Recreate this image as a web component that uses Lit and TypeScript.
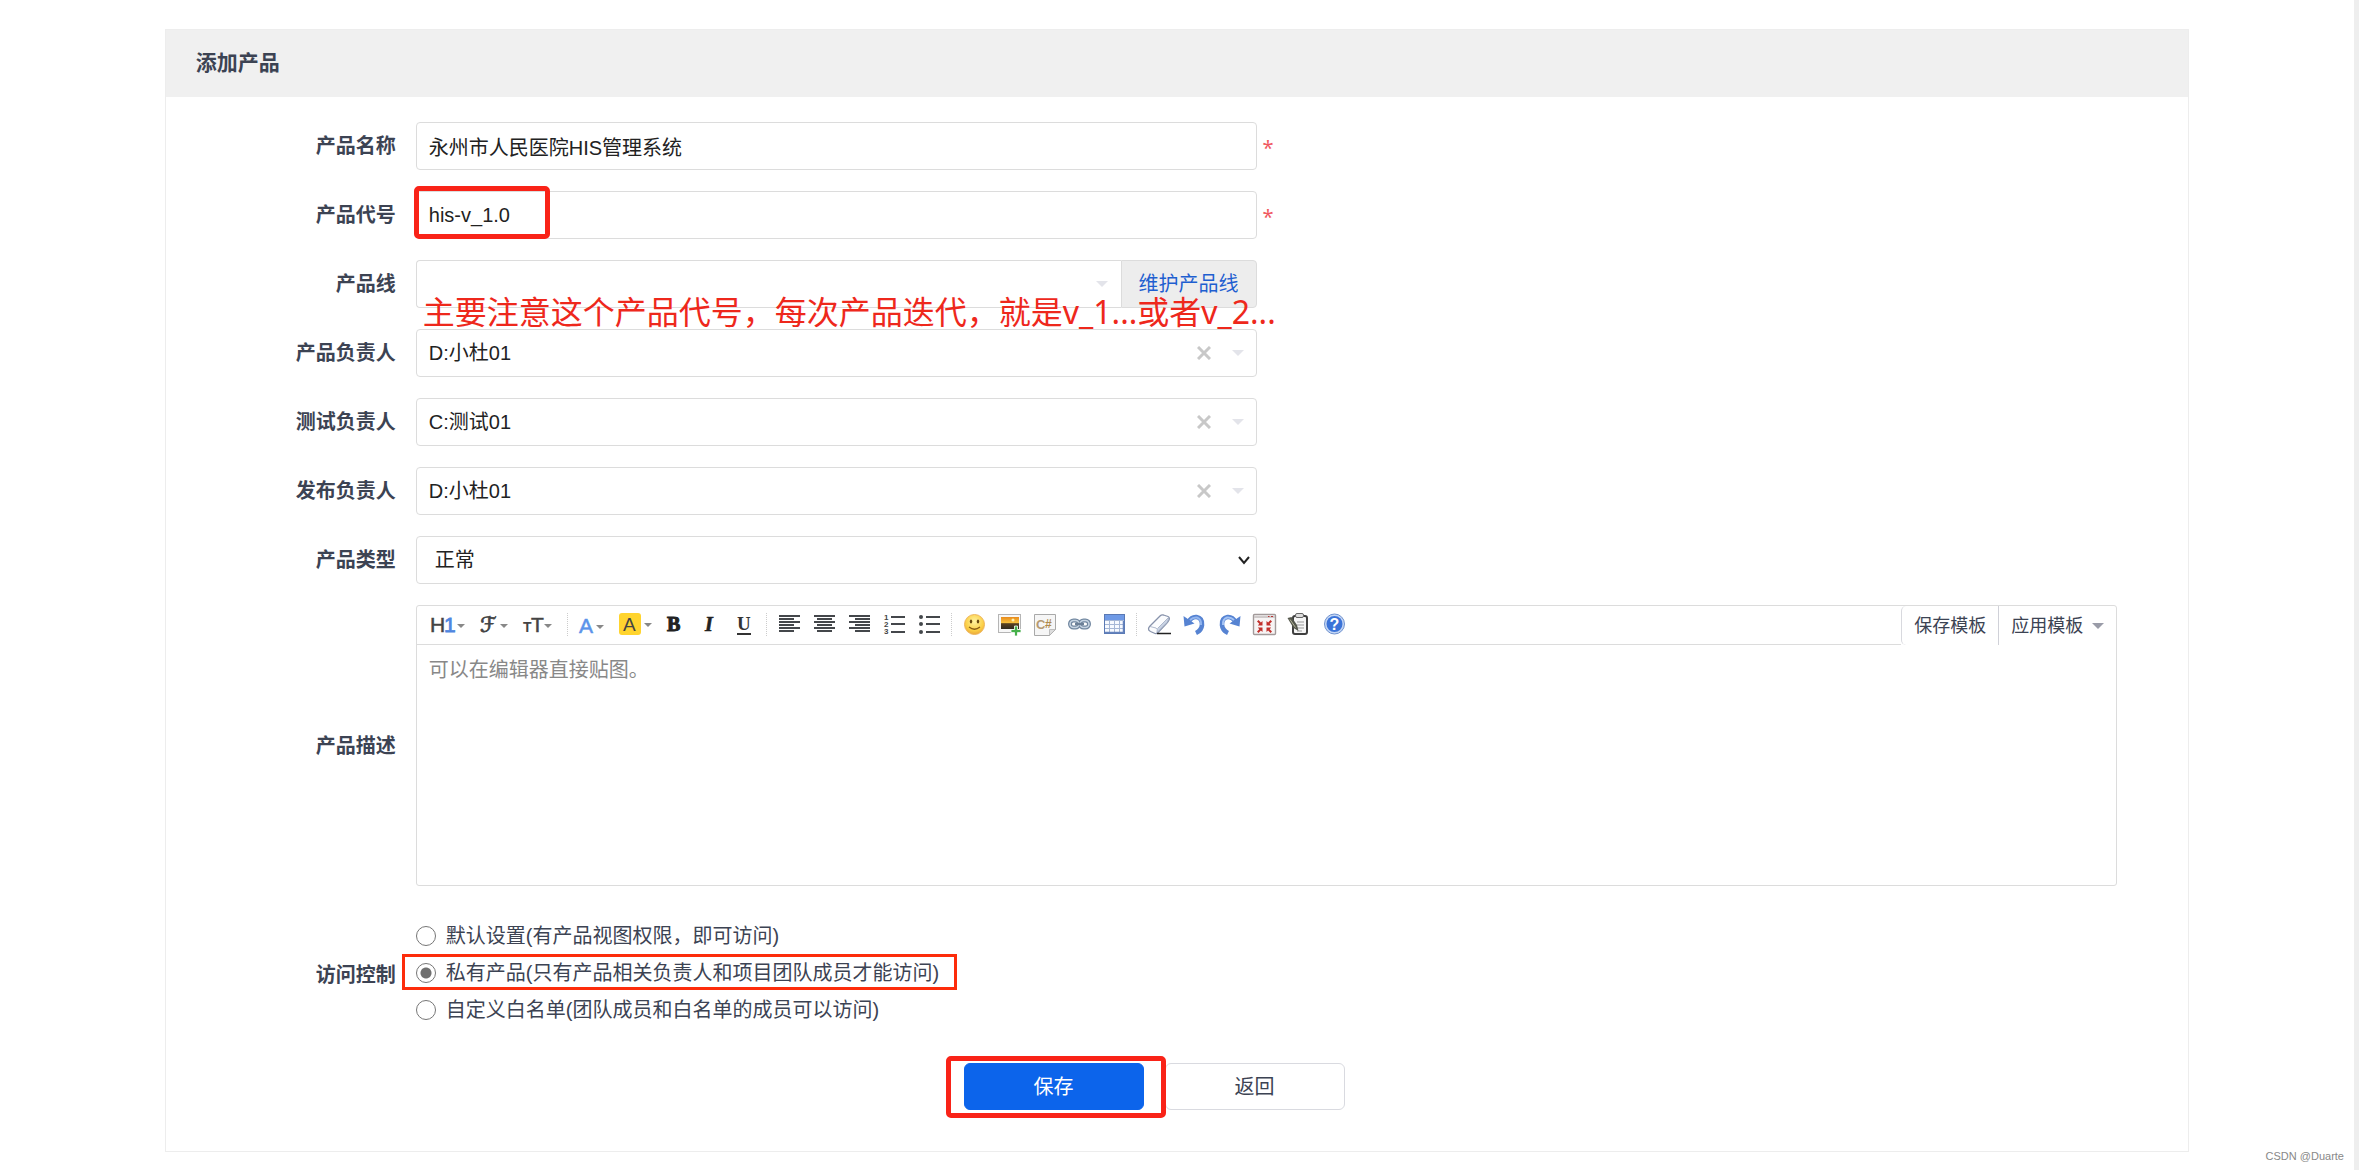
import { LitElement, html, css, svg, nothing } from "lit";
import { customElement, property } from "lit/decorators.js";

const lines = (rows: number[][]) =>
  svg`${rows.map(([x, y, w]) => svg`<rect x=${x} y=${y} width=${w} height="2" fill="#44474b"/>`)}`;

const icons: Record<string, unknown> = {
  heading: svg`<text x="5" y="20" font-family="Liberation Sans" font-size="21" fill="#444" stroke="#444" stroke-width=".5">H</text>
    <text x="19" y="20" font-family="Liberation Sans" font-size="21" fill="#4f86e0" stroke="#4f86e0" stroke-width=".8">1</text>
    <path d="M32 12h8l-4 4z" fill="#888"/>`,
  family: svg`<text x="9" y="20" font-family="DejaVu Sans" font-size="21" fill="#444" stroke="#444" stroke-width=".8">ℱ</text><path d="M29 12h8l-4 4z" fill="#888"/>`,
  size: svg`<text x="6" y="20" font-family="Liberation Sans" font-weight="bold" font-size="14" fill="#444">T</text>
    <text x="14" y="20" font-family="Liberation Sans" font-size="21" fill="#444" stroke="#444" stroke-width=".5">T</text>
    <path d="M27 12h8l-4 4z" fill="#888"/>`,
  color: svg`<text x="6" y="21" font-family="Liberation Sans" font-size="21" fill="#5c93ea" stroke="#5c93ea" stroke-width=".5">A</text><path d="M23 13h8l-4 4z" fill="#888"/>`,
  mark: svg`<rect x="4" y="1" width="22" height="22" rx="3" fill="#ffd42e"/><text x="8" y="19" font-family="Liberation Sans" font-size="19" fill="#444">A</text><path d="M29 11h8l-4 4z" fill="#888"/>`,
  bold: svg`<text x="10" y="19" font-family="Liberation Serif" font-weight="bold" font-size="20" fill="#222" stroke="#222" stroke-width="1">B</text>`,
  italic: svg`<text x="13" y="19" font-family="Liberation Serif" font-style="italic" font-weight="bold" font-size="20" fill="#222" stroke="#222" stroke-width=".6">I</text>`,
  underline: svg`<text x="10" y="18" font-family="Liberation Serif" font-weight="bold" font-size="19" fill="#333">U</text><rect x="10" y="21" width="14" height="2" fill="#333"/>`,
  left: lines([[7, 3, 21], [7, 6, 15], [7, 9, 21], [7, 12, 15], [7, 15, 21], [7, 18, 15]]),
  center: lines([[7, 3, 21], [10, 6, 15], [7, 9, 21], [10, 12, 15], [7, 15, 21], [10, 18, 15]]),
  right: lines([[7, 3, 21], [13, 6, 15], [7, 9, 21], [13, 12, 15], [7, 15, 21], [13, 18, 15]]),
  ordered: svg`${lines([[14, 4, 14], [14, 11, 14], [14, 19, 14]])}
    <g font-family="Liberation Sans" font-weight="bold" font-size="8" fill="#444"><text x="7" y="8">1</text><text x="7" y="15">2</text><text x="7" y="22">3</text></g>`,
  bullets: svg`${lines([[14, 4, 14], [14, 11, 14], [14, 19, 14]])}
    <g fill="#44474b"><circle cx="9" cy="5" r="2"/><circle cx="9" cy="12" r="2"/><circle cx="9" cy="20" r="2"/></g>`,
  smile: svg`<defs><radialGradient id="f" cx=".5" cy=".35" r=".65"><stop offset="0" stop-color="#fff3a0"/><stop offset=".7" stop-color="#fbcf45"/><stop offset="1" stop-color="#eba93a"/></radialGradient></defs>
    <circle cx="17.500" cy="12.500" r="10" fill="url(#f)" stroke="#eeb65c" stroke-width="1"/>
    <ellipse cx="14" cy="9.500" rx="1.200" ry="2" fill="#6b4a10"/><ellipse cx="21" cy="9.500" rx="1.200" ry="2" fill="#6b4a10"/>
    <path d="M12 15q5.500 4.500 11 0" fill="none" stroke="#8a5d14" stroke-width="1.300"/>`,
  image: svg`<defs><linearGradient id="s" x2="0" y2="1"><stop offset="0" stop-color="#e88a1c"/><stop offset=".5" stop-color="#f8c440"/><stop offset=".55" stop-color="#5a4222"/><stop offset="1" stop-color="#302a20"/></linearGradient></defs>
    <rect x="6.500" y="2.500" width="22" height="18" fill="#f7f7f7" stroke="#b5b5b5"/><rect x="9" y="5" width="18" height="12" fill="url(#s)"/>
    <circle cx="21" cy="8" r="1.500" fill="#fff3b0"/><path d="M22.500 14h3v3.500h3.500v3h-3.500v3.500h-3v-3.500h-3.500v-3h3.500z" fill="#45b04a" stroke="#fff" stroke-width=".8"/>`,
  code: svg`<path d="M7.500 2.500h21v15l-6 6h-15z" fill="#f6f6f6" stroke="#a9a9a9"/><path d="M28.500 17.500h-6v6z" fill="#ddd" stroke="#aaa" stroke-width=".7"/>
    <text x="9" y="17" font-family="Liberation Sans" font-weight="bold" font-size="13" fill="#b59a72">C</text><text x="18" y="16" font-family="Liberation Sans" font-weight="bold" font-size="12" fill="#b08a4c">#</text>`,
  link: svg`<g fill="none" stroke="#7187a0" stroke-width="4"><rect x="8" y="8.500" width="9" height="7" rx="3.500"/><rect x="18" y="8.500" width="9" height="7" rx="3.500"/></g>
    <g fill="none" stroke="#c6d4e2" stroke-width="1.600"><rect x="8" y="8.500" width="9" height="7" rx="3.500"/><rect x="18" y="8.500" width="9" height="7" rx="3.500"/></g><path d="M13 12h9" stroke="#6c8097" stroke-width="2.500"/>`,
  table: svg`<rect x="7.500" y="2.500" width="20" height="19" fill="#f7faff" stroke="#5a79b4"/><rect x="8" y="3" width="19" height="5" fill="#6f9ae6"/>
    <path d="M8 8.500h19M8 12.500h19M8 16.500h19M12.500 8v13M17.500 8v13M22.500 8v13" stroke="#a6b7d6"/><path d="M8 20.500h19M26.500 9v12" stroke="#6483bd" stroke-width="1.500"/>`,
  eraser: svg`<path d="M8 14L18 4q1.500-1.500 3.500-1l4.500 1.500q2 1 1 3.500-1 2-2.500 3.500L16 20.500q-1.500 1.500-3 1L8.500 19.500q-2-1-2-2.500t1.500-3z" fill="#fbfcfe" stroke="#8792ab" stroke-width="1.300"/>
    <path d="M8 14.500l6 1.500q2 .8 1 4.500l10-10q2-3 1.500-5l-11 11" fill="#c9d3e4" stroke="#9fabc2" stroke-width=".8"/><path d="M15 21.500h14" stroke="#222" stroke-width="1.500"/>`,
  undo: svg`<path d="M11.500 10q3-5.500 8-5 6 1 5.500 8-.5 5.500-6 8" fill="none" stroke="#5683d2" stroke-width="4.600"/><path d="M6.500 4l1 10.500 10-3z" fill="#5683d2"/><path d="M13 8q3-3 7-2.500 4.500 1.500 4 7.500" fill="none" stroke="#93b6ef" stroke-width="2"/>`,
  redo: svg`<path d="M23.500 10q-3-5.500-8-5-6 1-5.500 8 .5 5.500 6 8" fill="none" stroke="#5683d2" stroke-width="4.600"/><path d="M28.500 4l-1 10.500-10-3z" fill="#5683d2"/><path d="M22 8q-3-3-7-2.500-4.500 1.500-4 7.500" fill="none" stroke="#a3c3f5" stroke-width="2"/>`,
  full: svg`<rect x="6.500" y="2.500" width="22" height="20" rx="1" fill="#f7f4f4" stroke="#a29a9a" stroke-width="1.400"/><path d="M7 5h21" stroke="#cfcaca" stroke-width="2"/><path d="M21 4.500h1.500m1.500 0h2" stroke="#b33" stroke-width="1.200"/>
    <g fill="#c22f2b"><path d="M15.500 13.500v-4.500l-1.600 1.500L11.500 8 10 9.500l2.300 2.300-1.500 1.700zM19.500 13.500v-4.500l1.600 1.500L23.500 8 25 9.500l-2.300 2.300 1.500 1.700zM15.500 15.500v4.500l-1.600-1.500L11.500 21 10 19.500l2.300-2.300-1.500-1.700zM19.500 15.500v4.500l1.600-1.500L23.500 21l1.500-1.500-2.300-2.300 1.500-1.700z"/></g>`,
  clip: svg`<rect x="11" y="4" width="14" height="18" rx="2" fill="#f6f6f6" stroke="#3f3f3f" stroke-width="2"/><rect x="13.500" y="1.500" width="8" height="4" rx="1.500" fill="#ddd" stroke="#666"/>
    <path d="M15 10h7M15 13h7M15 16h7M15 19h5" stroke="#999"/><path d="M5.500 6l4-1 5.500 8 1.500 6-5-3z" fill="#55584d"/><path d="M8 7.500l5.500 8" stroke="#b5b59a"/>`,
  help: svg`<circle cx="17.500" cy="12" r="10" fill="#c4d6f4" stroke="#6f92cf"/><circle cx="17.500" cy="12" r="8" fill="#3b73d8"/>
    <text x="17.500" y="18" text-anchor="middle" font-family="Liberation Sans" font-weight="bold" font-size="16" fill="#fff">?</text>`,
};

type Tool = [string, string, number];
const toolGroups: Tool[][] = [
  [["heading", "段落", 46], ["family", "字体", 46], ["size", "文字大小", 46]],
  [["color", "文字颜色", 42], ["mark", "文字背景", 42], ["bold", "粗体", 35], ["italic", "斜体", 35], ["underline", "下划线", 35]],
  [["left", "左对齐", 35], ["center", "居中", 35], ["right", "右对齐", 35], ["ordered", "编号", 35], ["bullets", "项目符号", 35]],
  [["smile", "插入表情", 35], ["image", "图片", 35], ["code", "插入代码", 35], ["link", "超级链接", 35], ["table", "表格", 35]],
  [["eraser", "删除格式", 35], ["undo", "后退", 35], ["redo", "前进", 35], ["full", "全屏显示", 35], ["clip", "模板", 35], ["help", "帮助", 35]],
];

const base = css`
  * { box-sizing: border-box; }
  button, input, select, textarea {
    font: inherit;
    color: inherit;
    margin: 0;
  }
  button { cursor: pointer; }
`;

@customElement("rich-editor")
class RichEditor extends LitElement {
  static styles = [
    base,
    css`
      :host {
        display: flex;
        flex-direction: column;
        min-width: 0;
        height: 281px;
        border: 1px solid #dcdcdc;
        border-radius: 3px;
        overflow: hidden;
      }
      .bar { display: flex; height: 39px; flex: none; }
      .tools {
        display: flex;
        flex: 1;
        align-items: center;
        min-width: 0;
        padding-left: 8px;
        border-bottom: 1px solid #dcdcdc;
      }
      .group { display: flex; align-items: center; }
      .group + .group::before {
        content: "";
        width: 10px;
        height: 24px;
        background: linear-gradient(#ccc 50%, transparent 50%) 4px 0 / 1px 2px repeat-y;
      }
      .tool {
        padding: 0;
        border: 0;
        background: none;
        height: 26px;
      }
      .tool svg { display: block; overflow: visible; }
      .templates {
        display: flex;
        border-left: 1px solid #d8d9de;
        border-radius: 5px 0 0 5px;
        font-size: 18px;
        color: #3c4353;
      }
      .template {
        display: flex;
        align-items: center;
        gap: 9px;
        padding: 0 12px;
        border: 0;
        background: none;
      }
      .template + .template { border-left: 1px solid #d0d1d8; }
      .caret { fill: #9a9ca8; }
      .text {
        flex: 1;
        border: 0;
        outline: 0;
        resize: none;
        padding: 10px 12px;
        line-height: 30px;
        background: none;
      }
      .text::placeholder { color: #888; opacity: 1; }
    `,
  ];

  render() {
    return html`
      <div class="bar">
        <div class="tools">
          ${toolGroups.map(
            (group) => html`<div class="group">
              ${group.map(
                ([name, label, width]) => html`<button class="tool" type="button" aria-label=${label}>
                  <svg width=${width} height="26" viewBox="0 0 ${width} 26" aria-hidden="true">${icons[name]}</svg>
                </button>`
              )}
            </div>`
          )}
        </div>
        <div class="templates">
          <button class="template" type="button">保存模板</button>
          <button class="template" type="button">
            应用模板<svg class="caret" width="12" height="6"><path d="M0 0h12L6 6z" /></svg>
          </button>
        </div>
      </div>
      <textarea class="text" aria-label="产品描述" placeholder="可以在编辑器直接贴图。"></textarea>
    `;
  }
}

@customElement("user-picker")
class UserPicker extends LitElement {
  @property() value = "";
  @property() label = "";
  @property({ type: Boolean }) attached = false;

  static styles = [
    base,
    css`
      :host { display: block; position: relative; height: 48px; min-width: 0; flex: 1; }
      .select {
        appearance: none;
        width: 100%;
        height: 48px;
        padding: 0 12px;
        border: 1px solid #dcdcdc;
        border-radius: 4px;
        background: #fff;
        color: #222;
      }
      :host([attached]) .select { border-right: 0; border-radius: 4px 0 0 4px; }
      .marks {
        position: absolute;
        inset: 0 13px 0 auto;
        display: flex;
        align-items: center;
        gap: 21px;
        pointer-events: none;
      }
      .clear { padding: 0; border: 0; background: none; pointer-events: auto; display: flex; }
      .cross { stroke: #c8c8c8; stroke-width: 3; fill: none; }
      .caret { fill: #e3e4ea; }
    `,
  ];

  render() {
    return html`
      <select class="select" aria-label=${this.label}>
        <option>${this.value}</option>
      </select>
      <div class="marks">
        ${this.value
          ? html`<button class="clear" type="button" aria-label="清除">
              <svg class="cross" width="14" height="14"><path d="M1 1l12 12M13 1L1 13" /></svg>
            </button>`
          : nothing}
        <svg class="caret" width="12" height="6"><path d="M0 0h12L6 6z" /></svg>
      </div>
    `;
  }
}

@customElement("app-root")
class AppRoot extends LitElement {
  static styles = [
    base,
    css`
      :host {
        display: block;
        min-height: 100vh;
        box-sizing: border-box;
        padding: 29px 0 18px;
        border-right: 5px solid #eee;
        background: #fff;
        position: relative;
        font: 20px/30px "Liberation Sans", "Noto Sans CJK SC", sans-serif;
        color: #3c4353;
      }
      .card { width: 86%; margin: 0 auto; border: 1px solid #ededed; }
      .head {
        margin: 0;
        padding: 0 30px 2px;
        background: #f0f0f0;
        font-size: 21px;
        line-height: 65px;
        font-weight: bold;
      }
      .form {
        display: grid;
        grid-template-columns: 250px minmax(0, 841fr) minmax(0, 861fr);
        row-gap: 21px;
        padding: 25px 71px 41px 0;
      }
      .label { grid-column: 1; align-self: center; padding-right: 20px; text-align: right; font-weight: bold; }
      .field { grid-column: 2; position: relative; display: flex; }
      .control {
        width: 100%;
        height: 48px;
        padding: 0 12px;
        border: 1px solid #dcdcdc;
        border-radius: 4px;
        background: #fff;
        color: #222;
        outline: 0;
      }
      .native { appearance: none; padding: 0 18px; }
      .chevron {
        position: absolute;
        right: 6px;
        top: 20px;
        fill: none;
        stroke: #222;
        stroke-width: 2;
        pointer-events: none;
      }
      .star {
        align-self: center;
        padding: 4px 0 0 6px;
        font-family: "Noto Sans", sans-serif;
        color: #f0595f;
      }
      .addon {
        flex: none;
        display: flex;
        align-items: center;
        height: 48px;
        padding: 0 17px;
        border: 1px solid #dcdcdc;
        border-radius: 0 4px 4px 0;
        background: #ededed;
        color: #1f5fd0;
        text-decoration: none;
      }
      .wide { grid-column: 2 / 4; }
      .radios { padding: 10px 0 14px; display: flex; flex-direction: column; align-items: flex-start; }
      .choice { position: relative; display: flex; align-items: center; gap: 10px; height: 37px; }
      .radio {
        appearance: none;
        width: 20px;
        height: 20px;
        border: 1px solid #767676;
        border-radius: 50%;
        background: #fff;
      }
      .radio:checked { background: radial-gradient(circle, #6f6f6f 5px, #fff 6px); }
      .actions { grid-column: 1 / 4; display: flex; justify-content: center; gap: 21px; padding-left: 25px; }
      .slot { position: relative; }
      .btn {
        width: 180px;
        height: 47px;
        border: 1px solid #d9dae0;
        border-radius: 6px;
        background: #fff;
      }
      .primary { background: #0c64eb; border-color: #0c64eb; color: #fff; }
      .ring { position: absolute; border: 5px solid #f92318; border-radius: 5px; pointer-events: none; }
      .ring-code { inset: -5px auto 0 -2px; width: 136px; }
      .ring-choice { inset: 0 auto 1px -14px; width: 555px; border-width: 3px; border-color: #fd2c0b; border-radius: 0; }
      .ring-save { inset: -7px -22px -8px -18px; }
      .note {
        position: absolute;
        z-index: 1;
        left: 7px;
        top: 28px;
        white-space: nowrap;
        font: 32px/48px "Noto Sans", "Noto Sans CJK SC", sans-serif;
        color: #ee281c;
        pointer-events: none;
      }
      .credit {
        position: absolute;
        right: 10px;
        bottom: 6px;
        font-size: 11px;
        line-height: 16px;
        color: #888;
      }
    `,
  ];

  render() {
    const people = [
      ["产品负责人", "D:小杜01"],
      ["测试负责人", "C:测试01"],
      ["发布负责人", "D:小杜01"],
    ];
    const access = [
      "默认设置(有产品视图权限，即可访问)",
      "私有产品(只有产品相关负责人和项目团队成员才能访问)",
      "自定义白名单(团队成员和白名单的成员可以访问)",
    ];
    return html`
      <main class="card">
        <h1 class="head">添加产品</h1>
        <form class="form">
          <label class="label" for="name">产品名称</label>
          <div class="field"><input class="control" id="name" value="永州市人民医院HIS管理系统" /></div>
          <span class="star">*</span>

          <label class="label" for="code">产品代号</label>
          <div class="field">
            <input class="control" id="code" value="his-v_1.0" />
            <span class="ring ring-code"></span>
          </div>
          <span class="star">*</span>

          <span class="label">产品线</span>
          <div class="field">
            <user-picker attached label="产品线"></user-picker>
            <a class="addon" href="#">维护产品线</a>
            <span class="note">主要注意这个产品代号，每次产品迭代，就是v_1...或者v_2...</span>
          </div>

          ${people.map(
            ([label, value]) => html`<span class="label">${label}</span>
              <div class="field"><user-picker label=${label} value=${value}></user-picker></div>`
          )}

          <label class="label" for="type">产品类型</label>
          <div class="field">
            <select class="control native" id="type"><option>正常</option></select>
            <svg class="chevron" width="13" height="9"><path d="M1 1l5 6 5-6" /></svg>
          </div>

          <span class="label">产品描述</span>
          <rich-editor class="wide"></rich-editor>

          <span class="label" id="acl">访问控制</span>
          <div class="wide radios" role="radiogroup" aria-labelledby="acl">
            ${access.map(
              (text, i) => html`<label class="choice">
                <input class="radio" type="radio" name="acl" ?checked=${i === 1} />${text}
                ${i === 1 ? html`<span class="ring ring-choice"></span>` : nothing}
              </label>`
            )}
          </div>

          <div class="actions">
            <div class="slot">
              <button class="btn primary" type="button">保存</button>
              <span class="ring ring-save"></span>
            </div>
            <button class="btn" type="button">返回</button>
          </div>
        </form>
      </main>
      <span class="credit">CSDN @Duarte</span>
    `;
  }
}
